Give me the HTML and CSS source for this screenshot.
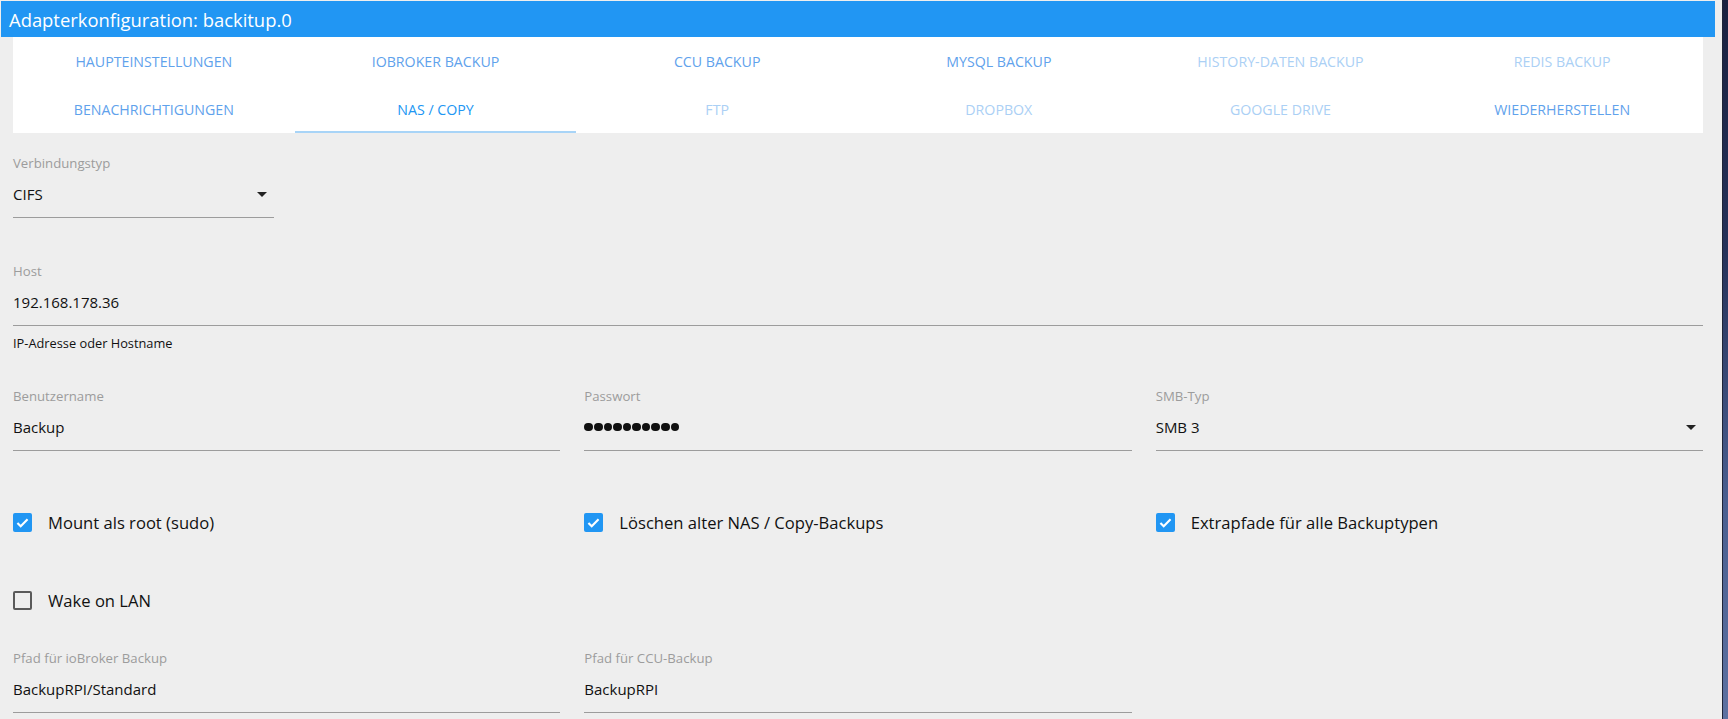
FILE: index.html
```html
<!DOCTYPE html>
<html lang="de">
<head>
    <meta charset="UTF-8">
    <meta name="viewport" content="width=device-width, initial-scale=1.0">
    <title>Adapterkonfiguration: backitup.0</title>
    <link rel="stylesheet" href="styles.css">
</head>
<body>
    <div class="window">
        <div class="titlebar">Adapterkonfiguration: backitup.0</div>

        <div class="tabs">
            <div class="tab">Haupteinstellungen</div>
            <div class="tab">ioBroker Backup</div>
            <div class="tab">CCU Backup</div>
            <div class="tab">MySQL Backup</div>
            <div class="tab disabled">History-Daten Backup</div>
            <div class="tab disabled">Redis Backup</div>
            <div class="tab">Benachrichtigungen</div>
            <div class="tab active">NAS / Copy</div>
            <div class="tab disabled">FTP</div>
            <div class="tab disabled">Dropbox</div>
            <div class="tab disabled">Google Drive</div>
            <div class="tab">Wiederherstellen</div>
        </div>

        <div class="content">
            <div class="field field-type">
                <div class="field-label">Verbindungstyp</div>
                <div class="field-value select">CIFS<span class="caret"></span></div>
            </div>

            <div class="field field-host">
                <div class="field-label">Host</div>
                <div class="field-value">192.168.178.36</div>
            </div>
            <div class="helper">IP-Adresse oder Hostname</div>

            <div class="row row-login">
                <div class="field">
                    <div class="field-label">Benutzername</div>
                    <div class="field-value">Backup</div>
                </div>
                <div class="field">
                    <div class="field-label">Passwort</div>
                    <div class="field-value password">
                        <span class="dot"></span><span class="dot"></span><span class="dot"></span><span class="dot"></span><span class="dot"></span>
                        <span class="dot"></span><span class="dot"></span><span class="dot"></span><span class="dot"></span><span class="dot"></span>
                    </div>
                </div>
                <div class="field">
                    <div class="field-label">SMB-Typ</div>
                    <div class="field-value select">SMB 3<span class="caret"></span></div>
                </div>
            </div>

            <div class="row row-checks">
                <label class="check">
                    <span class="box checked"><svg viewBox="0 0 18 18"><path d="M4.2 9.4l3.1 3.1 6.5-6.6"/></svg></span>
                    Mount als root (sudo)
                </label>
                <label class="check">
                    <span class="box checked"><svg viewBox="0 0 18 18"><path d="M4.2 9.4l3.1 3.1 6.5-6.6"/></svg></span>
                    Löschen alter NAS / Copy-Backups
                </label>
                <label class="check">
                    <span class="box checked"><svg viewBox="0 0 18 18"><path d="M4.2 9.4l3.1 3.1 6.5-6.6"/></svg></span>
                    Extrapfade für alle Backuptypen
                </label>
            </div>

            <div class="row row-wake">
                <label class="check">
                    <span class="box"></span>
                    Wake on LAN
                </label>
            </div>

            <div class="row row-paths">
                <div class="field">
                    <div class="field-label">Pfad für ioBroker Backup</div>
                    <div class="field-value">BackupRPI/Standard</div>
                </div>
                <div class="field">
                    <div class="field-label">Pfad für CCU-Backup</div>
                    <div class="field-value">BackupRPI</div>
                </div>
            </div>
        </div>
    </div>
    <div class="desktop"></div>
</body>
</html>
```

FILE: styles.css
```css
html, body {
    height: 100%;
}
body {
    margin: 0;
    display: flex;
    overflow: hidden;
    font-family: "Open Sans", "Noto Sans", sans-serif;
    color: #111;
}
.window {
    width: 1722px;
    background-color: #eeeeee;
}
.desktop {
    flex: 1;
    border-left: 1px solid #1e2438;
    background: linear-gradient(#1a2140, #26325a 35%, #4a5f90 70%, #5d71a1);
}
.titlebar {
    margin: 1px 7px 0 1px;
    height: 36px;
    padding-left: 8px;
    display: flex;
    align-items: center;
    background-color: #2196f3;
    color: white;
    font-size: 18.4px;
}
.tabs {
    margin: 0 19px 0 13px;
    display: grid;
    grid-template-columns: repeat(6, 1fr);
    background: white;
}
.tab {
    height: 48px;
    display: flex;
    align-items: center;
    justify-content: center;
    text-transform: uppercase;
    font-size: 14.2px;
    color: #5fa2ec;
}
.tab.active {
    color: #2196f3;
    box-shadow: inset 0 -2px #a8d4f7;
}
.tab.disabled {
    color: #abd0f5;
}
.content {
    padding: 0 19px 0 13px;
}
.field-label {
    font-size: 13.2px;
    line-height: 16px;
    color: #9c9c9c;
}
.field-value {
    margin-top: 13px;
    padding-bottom: 13px;
    line-height: 20px;
    height: 20px;
    font-size: 15px;
    border-bottom: 1px solid #9c9c9c;
    display: flex;
    align-items: center;
}
.select {
    justify-content: space-between;
}
.caret {
    width: 0;
    height: 0;
    margin-right: 7px;
    border-left: 5px solid transparent;
    border-right: 5px solid transparent;
    border-top: 5px solid #222;
}
.password {
    gap: 1px;
}
.dot {
    width: 8.6px;
    height: 8.6px;
    border-radius: 50%;
    background: #111;
}
.field-type {
    margin-top: 22px;
    width: 261px;
}
.field-host {
    margin-top: 45px;
}
.helper {
    margin-top: 9px;
    font-size: 12.8px;
    line-height: 16px;
    color: #111;
}
.row {
    display: grid;
    grid-template-columns: repeat(3, 1fr);
    gap: 24px;
}
.row-login {
    margin-top: 37px;
}
.row-checks {
    margin-top: 59px;
}
.row-wake {
    margin-top: 54px;
}
.row-paths {
    margin-top: 38px;
}
.check {
    display: flex;
    align-items: center;
    gap: 16px;
    height: 24px;
    font-size: 16.6px;
    color: #111;
}
.box {
    width: 19px;
    height: 19px;
    box-sizing: border-box;
    border: 2px solid #5a5a5a;
    border-radius: 2px;
    flex-shrink: 0;
}
.box.checked {
    border: none;
    background-color: #2196f3;
}
.box svg {
    display: block;
    width: 19px;
    height: 19px;
    fill: none;
    stroke: white;
    stroke-width: 2;
}
```
